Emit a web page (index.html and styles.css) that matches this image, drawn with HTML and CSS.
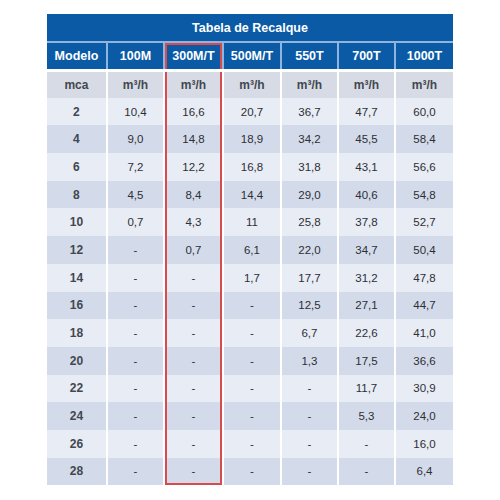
FILE: index.html
```html
<!DOCTYPE html>
<html lang="pt-BR">

<head>
  <meta charset="UTF-8">
  <meta name="viewport" content="width=device-width, initial-scale=1.0">
  <title>Tabela de Recalque</title>
  <link rel="stylesheet" href="styles.css">
</head>

<body>
  <table class="recalque">
    <colgroup>
      <col style="width:60px">
      <col style="width:57px">
      <col style="width:59px">
      <col style="width:58px">
      <col style="width:57px">
      <col style="width:57px">
      <col style="width:58px">
    </colgroup>
    <thead>
      <tr class="title">
        <th colspan="7">Tabela de Recalque</th>
      </tr>
      <tr class="models">
        <th>Modelo</th>
        <th>100M</th>
        <th class="hl hl-top">300M/T</th>
        <th>500M/T</th>
        <th>550T</th>
        <th>700T</th>
        <th>1000T</th>
      </tr>
    </thead>
    <tbody>
      <tr class="units">
        <td class="mca">mca</td>
        <td>m³/h</td>
        <td class="hl">m³/h</td>
        <td>m³/h</td>
        <td>m³/h</td>
        <td>m³/h</td>
        <td>m³/h</td>
      </tr>
      <tr><td class="mca">2</td><td>10,4</td><td class="hl">16,6</td><td>20,7</td><td>36,7</td><td>47,7</td><td>60,0</td></tr>
      <tr><td class="mca">4</td><td>9,0</td><td class="hl">14,8</td><td>18,9</td><td>34,2</td><td>45,5</td><td>58,4</td></tr>
      <tr><td class="mca">6</td><td>7,2</td><td class="hl">12,2</td><td>16,8</td><td>31,8</td><td>43,1</td><td>56,6</td></tr>
      <tr><td class="mca">8</td><td>4,5</td><td class="hl">8,4</td><td>14,4</td><td>29,0</td><td>40,6</td><td>54,8</td></tr>
      <tr><td class="mca">10</td><td>0,7</td><td class="hl">4,3</td><td>11</td><td>25,8</td><td>37,8</td><td>52,7</td></tr>
      <tr><td class="mca">12</td><td>-</td><td class="hl">0,7</td><td>6,1</td><td>22,0</td><td>34,7</td><td>50,4</td></tr>
      <tr><td class="mca">14</td><td>-</td><td class="hl">-</td><td>1,7</td><td>17,7</td><td>31,2</td><td>47,8</td></tr>
      <tr><td class="mca">16</td><td>-</td><td class="hl">-</td><td>-</td><td>12,5</td><td>27,1</td><td>44,7</td></tr>
      <tr><td class="mca">18</td><td>-</td><td class="hl">-</td><td>-</td><td>6,7</td><td>22,6</td><td>41,0</td></tr>
      <tr><td class="mca">20</td><td>-</td><td class="hl">-</td><td>-</td><td>1,3</td><td>17,5</td><td>36,6</td></tr>
      <tr><td class="mca">22</td><td>-</td><td class="hl">-</td><td>-</td><td>-</td><td>11,7</td><td>30,9</td></tr>
      <tr><td class="mca">24</td><td>-</td><td class="hl">-</td><td>-</td><td>-</td><td>5,3</td><td>24,0</td></tr>
      <tr><td class="mca">26</td><td>-</td><td class="hl">-</td><td>-</td><td>-</td><td>-</td><td>16,0</td></tr>
      <tr><td class="mca">28</td><td>-</td><td class="hl hl-bottom">-</td><td>-</td><td>-</td><td>-</td><td>6,4</td></tr>
    </tbody>
  </table>
</body>

</html>
```

FILE: styles.css
```css
* {
  padding: 0;
  margin: 0;
  box-sizing: border-box;
}

body {
  font-family: "Liberation Sans", Arial, sans-serif;
  background-color: #fff;
  padding-top: 14px;
}

.recalque {
  width: 406px;
  margin: 0 auto;
  border-collapse: collapse;
  table-layout: fixed;
  color: #2d2f33;
  font-size: 11.5px;
}

.recalque th,
.recalque td {
  text-align: center;
  vertical-align: middle;
  padding: 0;
}

.title th {
  height: 28px;
  background-color: #0b5aa6;
  color: #fff;
  font-size: 12.5px;
  font-weight: bold;
  border-bottom: 2px solid #8fb4de;
}

.models th {
  height: 28px;
  background-color: #0b5aa6;
  color: #fff;
  font-size: 12.5px;
  font-weight: bold;
  border-right: 2px solid #8fb4de;
  border-bottom: 3px solid #fff;
}

.models th:last-child {
  border-right: none;
}

tbody td {
  height: 27.7px;
  border-right: 2px solid #fff;
  background-color: #e8ecf5;
}

tbody td:last-child {
  border-right: none;
}

tbody tr:nth-child(odd) td {
  background-color: #d3dbeb;
}

.units td {
  background-color: #d6dbe6 !important;
  font-size: 12px;
  font-weight: bold;
  color: #43474f;
}

.mca {
  font-weight: bold;
  font-size: 12px;
  color: #43474f;
}

.hl {
  box-shadow: inset 2px 0 #d94a4f, inset -2px 0 #d94a4f;
}

.hl-top {
  box-shadow: inset 2px 0 #d94a4f, inset -2px 0 #d94a4f, inset 0 2px #d94a4f;
}

.hl-bottom {
  box-shadow: inset 2px 0 #d94a4f, inset -2px 0 #d94a4f, inset 0 -2px #d94a4f;
}
```
